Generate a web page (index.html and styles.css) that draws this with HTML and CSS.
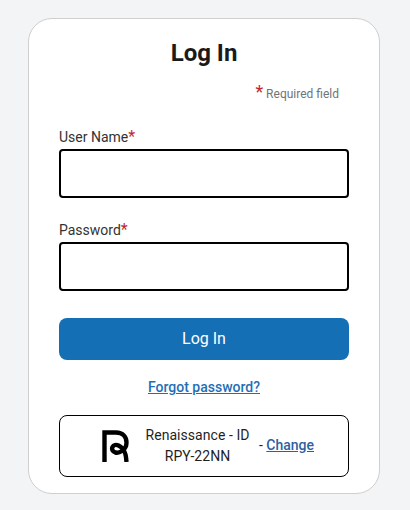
FILE: index.html
```html
<!DOCTYPE html>
<html lang="en">
<head>
<meta charset="utf-8">
<title>Log In</title>
<link rel="stylesheet" href="styles.css">
</head>
<body>
<main class="card">
  <h1 class="title">Log In</h1>
  <p class="required"><span class="star star-large">*</span> Required field</p>
  <form class="form">
    <div class="field">
      <label class="label" for="user">User Name<span class="star">*</span></label>
      <input class="input" id="user" type="text">
    </div>
    <div class="field">
      <label class="label" for="pass">Password<span class="star">*</span></label>
      <input class="input" id="pass" type="password">
    </div>
    <button class="submit" type="button">Log In</button>
  </form>
  <a class="forgot" href="#">Forgot password?</a>
  <div class="org">
    <svg class="logo" viewBox="0 0 27 32" width="27" height="32" aria-hidden="true">
      <path d="M2.5 32V2.5H14C21 2.5 24.5 7 24.5 12.5C24.5 16 23 19 20 21C17.5 22.6 15.5 23 13.5 22.5C10.5 21.7 9.5 19 10.5 17C11.5 15 14 14.4 16.5 15.6C20 17.3 22.5 21 23.5 24.5C24 26.5 24.3 29 24.5 32" fill="none" stroke="#000" stroke-width="4.4"/>
    </svg>
    <div class="org-name">
      <span>Renaissance - ID</span>
      <span>RPY-22NN</span>
    </div>
    <div class="org-change">- <a class="change" href="#">Change</a></div>
  </div>
</main>
</body>
</html>
```
FILE: styles.css
```css
* {
  box-sizing: border-box;
}
html, body {
  height: 100%;
}
body {
  margin: 0;
  padding: 18px 30px 16px 28px;
  background: #f3f4f6;
  font-family: Roboto, "Liberation Sans", sans-serif;
  color: #1f1f1f;
}
.card {
  display: flex;
  flex-direction: column;
  height: 476px;
  padding: 0 30px;
  background: #fff;
  border: 1px solid #cfcfcf;
  border-radius: 24px;
}
.title {
  margin: 19px 0 0;
  font-size: 24px;
  line-height: 30px;
  font-weight: 700;
  text-align: center;
  color: #1a1a1a;
}
.required {
  margin: 14px 10px 0 0;
  height: 20px;
  line-height: 20px;
  font-size: 12px;
  text-align: right;
  color: #6f7479;
}
.star {
  color: #c4262e;
  font-size: 16px;
}
.star-large {
  font-size: 18px;
}
.form {
  display: flex;
  flex-direction: column;
  margin-top: 25px;
}
.field {
  display: flex;
  flex-direction: column;
  margin-bottom: 23px;
}
.label {
  height: 20px;
  line-height: 20px;
  font-size: 14px;
  color: #333;
}
.input {
  height: 49px;
  margin-top: 2px;
  border: 2px solid #000;
  border-radius: 4px;
  background: #fff;
}
.field + .field {
  margin-top: -1px;
}
.submit {
  height: 42px;
  margin-top: 4px;
  padding: 0 0 2px;
  border: 0;
  border-radius: 8px;
  background: #146fb5;
  color: #fff;
  font-family: inherit;
  font-size: 16px;
}
.forgot {
  margin-top: 17px;
  line-height: 20px;
  font-size: 14px;
  font-weight: 500;
  text-align: center;
  color: #1f6fb5;
}
.org {
  display: flex;
  align-items: center;
  height: 62px;
  margin-top: 18px;
  padding-left: 42px;
  border: 1px solid #000;
  border-radius: 8px;
  font-size: 14px;
}
.logo {
  flex: none;
}
.org-name {
  display: flex;
  flex-direction: column;
  align-items: center;
  width: 105px;
  margin-left: 16px;
  line-height: 21px;
  letter-spacing: 0.05px;
}
.org-change {
  margin-left: 9px;
  padding-bottom: 2px;
}
.change {
  color: #2f5f9f;
  font-weight: 500;
}
```
